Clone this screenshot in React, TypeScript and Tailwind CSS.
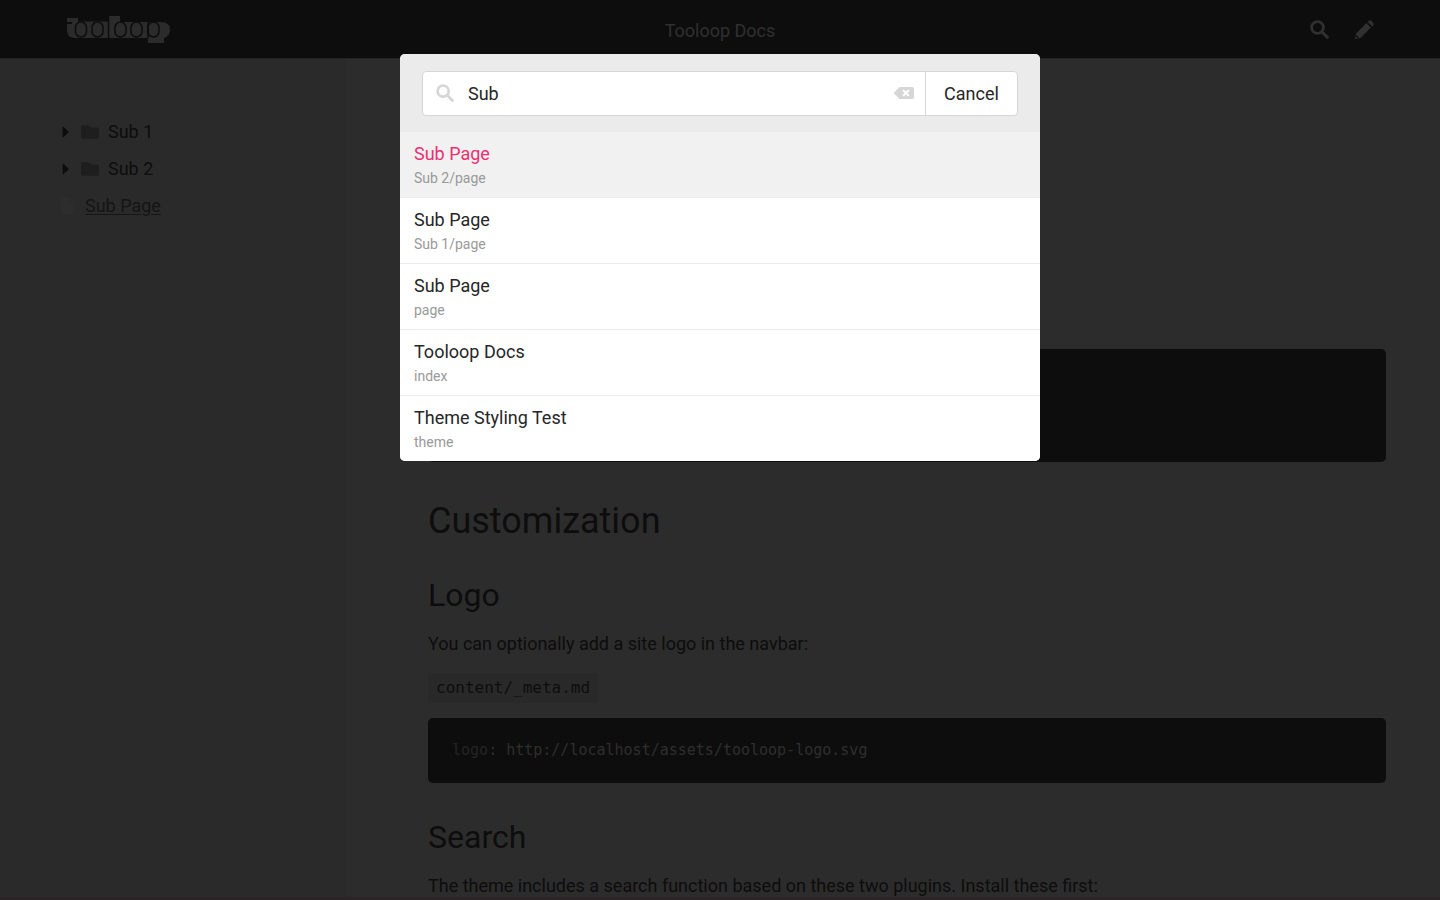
import React from "react";
import { FaFolder, FaFile, FaCaretRight, FaBackspace } from "react-icons/fa";

const results = [
  { title: "Sub Page", path: "Sub 2/page" },
  { title: "Sub Page", path: "Sub 1/page" },
  { title: "Sub Page", path: "page" },
  { title: "Tooloop Docs", path: "index" },
  { title: "Theme Styling Test", path: "theme" },
];

function Logo() {
  return (
    <svg viewBox="0 0 104 30" className="h-[30px] w-[104px]" aria-label="tooloop" role="img">
      <path
        fill="#2b2b2b"
        d="M1 4H12V7.500H42V2H54V8H95Q104 8 104 15.500Q104 22 98 24V29H82V24H8Q1 23 1 16V9.500H5.500V8H1Z"
      />
      <g fill="none" stroke="#0d0d0d" strokeWidth="1.500">
        <rect x="9.500" y="8" width="11" height="15" rx="5.500" />
        <rect x="26" y="8" width="11" height="15" rx="5.500" />
        <rect x="49" y="8" width="11" height="15" rx="5.500" />
        <rect x="65" y="8" width="11" height="15" rx="5.500" />
        <rect x="82" y="8" width="11" height="15" rx="5.500" />
        <path d="M42.500 2v22M82 8v16M1 9h5" />
      </g>
    </svg>
  );
}

function SearchIcon({ className }: { className: string }) {
  return (
    <svg viewBox="0 0 19 19" className={className} fill="none" stroke="currentColor" aria-hidden="true">
      <circle cx="7.500" cy="7.500" r="5.900" strokeWidth="2.800" />
      <path d="M12 12l5.300 5.300" strokeWidth="3" strokeLinecap="round" />
    </svg>
  );
}

function PencilIcon({ className }: { className: string }) {
  return (
    <svg viewBox="0 0 19 19" className={className} fill="currentColor" aria-hidden="true">
      <path d="M12.600 1.900l1.200-1.200q1.200-1 2.500.1l1.900 1.900q1.200 1.300.1 2.500l-1.200 1.200z" />
      <path d="M11.400 3.100l4.500 4.500L5.600 17.900 3.600 18.300 3 16.100.8 15.300 1.100 13.400z" />
      <path d="M.5 16l2.500 2.500-3 .5z" />
    </svg>
  );
}

function Folder({ name }: { name: string }) {
  return (
    <li>
      <button type="button" className="flex h-[37px] items-center">
        <FaCaretRight className="mr-[9px] h-[18px] w-[12px] text-[#0d0d0d]" />
        <FaFolder className="mr-[9px] size-[18px] text-[#1e1e1e]" />
        {name}
      </button>
    </li>
  );
}

export default function App() {
  return (
    <div className="relative flex h-screen flex-col overflow-hidden bg-[#2c2c2c] font-['Roboto',sans-serif] text-[18px] leading-[26px] text-[#0d0d0d]">
      <header className="grid h-[59px] shrink-0 grid-cols-3 items-center border-b border-[#222222] bg-[#0d0d0d] px-[66px] text-[#303030]">
        <a href="#home">
          <Logo />
        </a>
        <h1 className="pt-1 text-center">Tooloop Docs</h1>
        <div className="flex justify-end gap-[26px]">
          <button type="button" aria-label="Search">
            <SearchIcon className="size-[19px]" />
          </button>
          <button type="button" aria-label="Edit">
            <PencilIcon className="size-[19px]" />
          </button>
        </div>
      </header>

      <div className="flex min-h-0 flex-1">
        <nav className="w-[346px] shrink-0 bg-[#2a2a2a] pl-[60px] pt-[54px]">
          <ul>
            <Folder name="Sub 1" />
            <Folder name="Sub 2" />
            <li className="flex h-[37px] items-center gap-[10px]">
              <FaFile className="h-[17px] w-[15px] text-[#2d2d2d]" />
              <a href="#page" className="text-[#151515] underline underline-offset-2">
                Sub Page
              </a>
            </li>
          </ul>
        </nav>
        <main className="min-w-0 flex-1 overflow-hidden pl-[82px] pr-[54px] pt-[290px]">
          <div className="h-[113px] rounded-[5px] bg-[#0d0d0d]" />
          <h2 className="mt-9 text-[36px] leading-[46px]">Customization</h2>
          <h3 className="mt-[31px] text-[32px] leading-10">Logo</h3>
          <p className="mt-4">You can optionally add a site logo in the navbar:</p>
          <p className="mt-4 flex">
            <code className="rounded-[3px] bg-[#292929] px-2 py-0.5 font-['DejaVu_Sans_Mono',monospace] text-[16px]">
              content/_meta.md
            </code>
          </p>
          <pre className="mt-[15px] rounded-[5px] bg-[#0d0d0d] px-6 py-5 leading-[25px] text-[#2f2f2f]">
            <code className="font-['DejaVu_Sans_Mono',monospace] text-[15px]">
              <span className="text-[#252525]">logo</span>: http://localhost/assets/tooloop-logo.svg
            </code>
          </pre>
          <h3 className="mt-[34px] text-[32px] leading-10">Search</h3>
          <p className="mt-4">The theme includes a search function based on these two plugins. Install these first:</p>
        </main>
      </div>
      <div className="absolute inset-x-0 bottom-0 h-[3px] bg-[#2a2427]" />

      <section
        role="dialog"
        aria-label="Search"
        className="absolute inset-x-0 top-[54px] mx-auto w-[640px] overflow-hidden rounded-[5px] bg-white text-[#262626]"
      >
        <form className="flex h-[78px] items-center bg-[#ebebeb] px-[22px]">
          <div className="flex h-[45px] flex-1 rounded-[4px] border border-[#d6d6d6] bg-white">
            <label className="flex min-w-0 flex-1 items-center px-[13px]">
              <SearchIcon className="size-[18px] shrink-0 text-[#d6d6d6]" />
              <input
                type="text"
                aria-label="Search documents"
                defaultValue="Sub"
                className="ml-[14px] min-w-0 flex-1 bg-transparent pt-0.5 outline-none"
              />
            </label>
            <button type="button" aria-label="Clear" className="pr-[11px] text-[#d6d6d6]">
              <FaBackspace className="size-[20px]" />
            </button>
            <button type="button" className="w-[92px] border-l border-[#d6d6d6] pt-0.5">
              Cancel
            </button>
          </div>
        </form>
        <ul className="divide-y divide-[#ececec]">
          {results.map((result, i) => (
            <li key={result.path} className={i === 0 ? "bg-[#f1f1f1]" : "bg-white"}>
              <a href={"#" + result.path} className="block px-[14px] pb-2 pt-[9px]">
                <span className={i === 0 ? "block text-[#ec2f70]" : "block"}>{result.title}</span>
                <span className="block text-[14px] leading-[22px] text-[#999999]">{result.path}</span>
              </a>
            </li>
          ))}
        </ul>
      </section>
    </div>
  );
}
